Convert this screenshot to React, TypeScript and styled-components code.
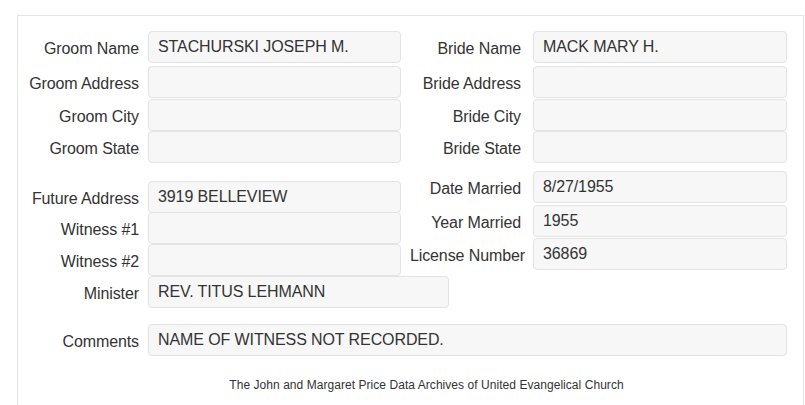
import React from "react";
import styled, { createGlobalStyle } from "styled-components";

const Global = createGlobalStyle`
  html, body { margin: 0; padding: 0; background: #ffffff; }
  body { font-family: "Liberation Sans", Arial, sans-serif; color: #333333; overflow: hidden; }
`;

const Panel = styled.div`
  margin: 15px 1px 0 17px;
  border: 1px solid #e3e3e3;
  border-bottom: none;
  min-height: 420px;
  padding-top: 15px;
  box-sizing: border-box;
`;

const Section = styled.div`
  display: flex;
  align-items: flex-start;
`;

const Column = styled.div<{ $side: "left" | "right"; $rows: string; $mt?: number }>`
  display: grid;
  grid-template-columns: ${(p) => (p.$side === "left" ? "121px 253px" : "124px 254px")};
  grid-template-rows: ${(p) => p.$rows};
  column-gap: ${(p) => (p.$side === "left" ? 9 : 8)}px;
  align-items: start;
  margin-top: ${(p) => p.$mt ?? 0}px;
`;

const Label = styled.div<{ $tight?: boolean }>`
  font-size: 16px;
  line-height: 32px;
  height: 32px;
  text-align: right;
  white-space: nowrap;
  padding-top: 2px;
  box-sizing: border-box;
  padding-right: ${(p) => (p.$tight ? 0 : 4)}px;
  letter-spacing: -0.1px;
`;

const LeftLabel = styled(Label)`
  padding-right: 0;
`;

const Field = styled.div<{ $width?: number }>`
  box-sizing: border-box;
  height: 32px;
  width: ${(p) => (p.$width ? `${p.$width}px` : "100%")};
  background: #f7f7f7;
  border: 1px solid #e3e3e3;
  border-radius: 4px;
  padding: 0 9px;
  font-size: 16px;
  line-height: 30px;
  white-space: nowrap;
  overflow: hidden;
  letter-spacing: -0.1px;
`;

const WideRow = styled.div<{ $mt: number }>`
  display: grid;
  grid-template-columns: 121px 1fr;
  column-gap: 9px;
  align-items: start;
  margin-top: ${(p) => p.$mt}px;
`;

const Footer = styled.div`
  margin-top: 22px;
  padding-left: 32px;
  text-align: center;
  font-size: 12px;
  line-height: 15px;
  letter-spacing: 0.05px;
`;

type Item = { label: string; value?: string; tight?: boolean };

const groom: Item[] = [
  { label: "Groom Name", value: "STACHURSKI JOSEPH M." },
  { label: "Groom Address" },
  { label: "Groom City" },
  { label: "Groom State" },
];
const bride: Item[] = [
  { label: "Bride Name", value: "MACK MARY H." },
  { label: "Bride Address" },
  { label: "Bride City" },
  { label: "Bride State" },
];
const extraLeft: Item[] = [
  { label: "Future Address", value: "3919 BELLEVIEW" },
  { label: "Witness #1" },
  { label: "Witness #2" },
];
const extraRight: Item[] = [
  { label: "Date Married", value: "8/27/1955" },
  { label: "Year Married", value: "1955" },
  { label: "License Number", value: "36869", tight: true },
];

function LeftItems({ items }: { items: Item[] }) {
  return (
    <>
      {items.map((it) => (
        <React.Fragment key={it.label}>
          <LeftLabel>{it.label}</LeftLabel>
          <Field>{it.value ?? ""}</Field>
        </React.Fragment>
      ))}
    </>
  );
}

function RightItems({ items }: { items: Item[] }) {
  return (
    <>
      {items.map((it) => (
        <React.Fragment key={it.label}>
          <Label $tight={it.tight}>{it.label}</Label>
          <Field>{it.value ?? ""}</Field>
        </React.Fragment>
      ))}
    </>
  );
}

export default function App() {
  return (
    <>
      <Global />
      <Panel>
        <Section>
          <Column $side="left" $rows="35px 33px 32px 32px">
            <LeftItems items={groom} />
          </Column>
          <Column $side="right" $rows="35px 33px 32px 32px">
            <RightItems items={bride} />
          </Column>
        </Section>
        <Section>
          <Column $side="left" $rows="31px 32px 32px" $mt={18}>
            <LeftItems items={extraLeft} />
          </Column>
          <Column $side="right" $rows="34px 33px 32px" $mt={8}>
            <RightItems items={extraRight} />
          </Column>
        </Section>
        <WideRow $mt={0}>
          <LeftLabel>Minister</LeftLabel>
          <Field $width={301}>REV. TITUS LEHMANN</Field>
        </WideRow>
        <WideRow $mt={16}>
          <LeftLabel>Comments</LeftLabel>
          <Field $width={639}>NAME OF WITNESS NOT RECORDED.</Field>
        </WideRow>
        <Footer>The John and Margaret Price Data Archives of United Evangelical Church</Footer>
      </Panel>
    </>
  );
}
